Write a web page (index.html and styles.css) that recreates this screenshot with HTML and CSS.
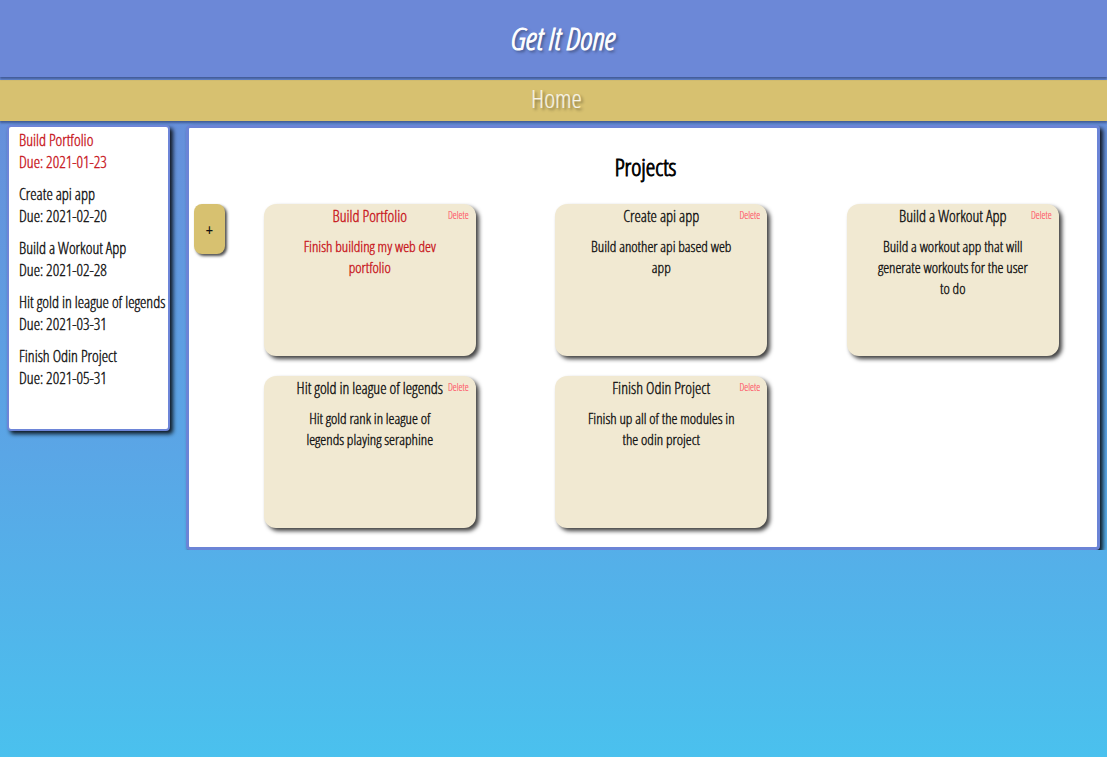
FILE: index.html
```html
<!DOCTYPE html>
<html lang="en">
<head>
<meta charset="utf-8">
<title>Get It Done</title>
<link rel="stylesheet" href="styles.css">
</head>
<body>
<header class="top">
  <h1 class="brand">Get It Done</h1>
</header>
<nav class="bar">
  <span class="bar-title">Home</span>
</nav>
<div class="content">
  <aside class="sidebar">
    <div class="side-item active">
      <div>Build Portfolio</div>
      <div>Due: 2021-01-23</div>
    </div>
    <div class="side-item">
      <div>Create api app</div>
      <div>Due: 2021-02-20</div>
    </div>
    <div class="side-item">
      <div>Build a Workout App</div>
      <div>Due: 2021-02-28</div>
    </div>
    <div class="side-item">
      <div>Hit gold in league of legends</div>
      <div>Due: 2021-03-31</div>
    </div>
    <div class="side-item">
      <div>Finish Odin Project</div>
      <div>Due: 2021-05-31</div>
    </div>
  </aside>
  <main class="panel">
    <h2 class="panel-title">Projects</h2>
    <div class="panel-body">
      <button class="add-btn" type="button">+</button>
      <div class="grid">
        <div class="card active">
          <span class="delete">Delete</span>
          <div class="card-title">Build Portfolio</div>
          <p class="card-desc">Finish building my web dev portfolio</p>
        </div>
        <div class="card">
          <span class="delete">Delete</span>
          <div class="card-title">Create api app</div>
          <p class="card-desc">Build another api based web app</p>
        </div>
        <div class="card">
          <span class="delete">Delete</span>
          <div class="card-title">Build a Workout App</div>
          <p class="card-desc">Build a workout app that will generate workouts for the user to do</p>
        </div>
        <div class="card">
          <span class="delete">Delete</span>
          <div class="card-title">Hit gold in league of legends</div>
          <p class="card-desc">Hit gold rank in league of legends playing seraphine</p>
        </div>
        <div class="card">
          <span class="delete">Delete</span>
          <div class="card-title">Finish Odin Project</div>
          <p class="card-desc">Finish up all of the modules in the odin project</p>
        </div>
      </div>
    </div>
  </main>
</div>
</body>
</html>
```

FILE: styles.css
```css
html {
  min-height: 100%;
  background: linear-gradient(#6b87d6 0%, #5aa6e6 60%, #4ac1ee 100%);
}

body {
  margin: 0;
  font-family: "Open Sans", "Liberation Sans Narrow", "DejaVu Sans Condensed", sans-serif;
  font-stretch: 75%;
  font-weight: 300;
  -webkit-text-stroke: 0.35px;
  color: #111;
}

.top {
  height: 77px;
  background: #6c88d7;
  display: flex;
  align-items: center;
  justify-content: center;
  box-shadow: 0 2px 2px rgba(20, 30, 70, 0.45);
  position: relative;
  z-index: 2;
}

.brand {
  margin: 0 0 2px;
  font-size: 32px;
  font-style: italic;
  font-weight: 300;
  color: #fff;
  -webkit-text-stroke: 1px #fff;
  text-shadow: 2px 2px 3px rgba(0, 0, 0, 0.55);
  padding-left: 20px;
}

.bar {
  margin-top: 3px;
  height: 41px;
  box-sizing: border-box;
  padding-bottom: 5px;
  background: #d7c170;
  display: flex;
  align-items: center;
  justify-content: center;
  box-shadow: 0 2px 2px rgba(20, 30, 70, 0.45);
  position: relative;
  z-index: 1;
}

.bar-title {
  font-size: 26px;
  font-weight: 300;
  color: #f7f3e6;
  -webkit-text-stroke: 0.2px #f7f3e6;
  text-shadow: 2px 2px 3px rgba(0, 0, 0, 0.45);
  padding-left: 6px;
}

.content {
  display: flex;
  align-items: flex-start;
  gap: 16px;
  padding: 4px 0 0 7px;
}

.sidebar {
  flex: none;
  box-sizing: border-box;
  width: 163px;
  height: 306px;
  background: #fff;
  border: 2px solid #6d85d8;
  border-radius: 4px;
  box-shadow: 3px 3px 4px rgba(0, 0, 0, 0.85);
  padding: 2px 0 0 10px;
  font-size: 16px;
  line-height: 22px;
}

.side-item {
  margin-bottom: 10px;
  white-space: nowrap;
}

.side-item.active {
  color: #c8161d;
}

.panel {
  flex: none;
  box-sizing: border-box;
  width: 914px;
  background: #fff;
  border: 3px solid #6b84d6;
  border-radius: 4px;
  box-shadow: 3px 3px 4px rgba(0, 0, 0, 0.85);
  padding: 0 0 19px 5px;
}

.panel-title {
  margin: 22px 0 20px;
  text-align: center;
  font-size: 24px;
  font-weight: 300;
  -webkit-text-stroke: 0.9px #000;
  line-height: 34px;
  color: #000;
}

.panel-body {
  display: flex;
  align-items: flex-start;
}

.add-btn {
  flex: none;
  width: 31px;
  height: 50px;
  margin: 0;
  padding: 0;
  border: none;
  border-radius: 8px;
  background: #d7c170;
  box-shadow: 2px 2px 3px rgba(0, 0, 0, 0.7);
  font-family: inherit;
  font-stretch: 75%;
  font-weight: 400;
  font-size: 17px;
  -webkit-text-stroke: 0;
  color: #111;
}

.grid {
  flex: none;
  margin-left: -1px;
  display: grid;
  grid-template-columns: repeat(3, 291.5px);
  row-gap: 20px;
  justify-items: center;
}

.card {
  position: relative;
  box-sizing: border-box;
  width: 212px;
  height: 152px;
  background: #f1e9d2;
  border-radius: 12px;
  box-shadow: 3px 3px 4px rgba(0, 0, 0, 0.75);
  padding-top: 1px;
  text-align: center;
}

.card-title {
  font-size: 16px;
  line-height: 22px;
}

.card-desc {
  margin: 9px auto 0;
  width: 160px;
  font-size: 15px;
  line-height: 21px;
}

.delete {
  position: absolute;
  top: 5px;
  right: 7px;
  font-size: 10px;
  line-height: 12px;
  color: #ff4f63;
  -webkit-text-stroke: 0.15px #ff4f63;
}

.card.active .card-title,
.card.active .card-desc {
  color: #c8161d;
}
```
